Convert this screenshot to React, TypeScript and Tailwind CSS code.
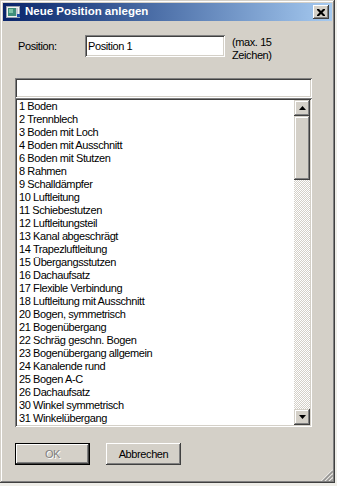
const items = [
  "1 Boden",
  "2 Trennblech",
  "3 Boden mit Loch",
  "4 Boden mit Ausschnitt",
  "6 Boden mit Stutzen",
  "8 Rahmen",
  "9 Schalldämpfer",
  "10 Luftleitung",
  "11 Schiebestutzen",
  "12 Luftleitungsteil",
  "13 Kanal abgeschrägt",
  "14 Trapezluftleitung",
  "15 Übergangsstutzen",
  "16 Dachaufsatz",
  "17 Flexible Verbindung",
  "18 Luftleitung mit Ausschnitt",
  "20 Bogen, symmetrisch",
  "21 Bogenübergang",
  "22 Schräg geschn. Bogen",
  "23 Bogenübergang allgemein",
  "24 Kanalende rund",
  "25 Bogen A-C",
  "26 Dachaufsatz",
  "30 Winkel symmetrisch",
  "31 Winkelübergang",
];

// classic win2k bevels
const raised =
  "shadow-[inset_-1px_-1px_0_#404040,inset_1px_1px_0_#d4d0c8,inset_-2px_-2px_0_#808080,inset_2px_2px_0_#ffffff]";
const sunken =
  "shadow-[inset_1px_1px_0_#808080,inset_-1px_-1px_0_#ffffff,inset_2px_2px_0_#404040,inset_-2px_-2px_0_#d4d0c8]";
const button =
  "shadow-[inset_-1px_-1px_0_#404040,inset_1px_1px_0_#ffffff,inset_-2px_-2px_0_#808080,inset_2px_2px_0_#d4d0c8]";

function Arrow({ down }: { down?: boolean }) {
  return (
    <div className={`w-[16px] h-[16px] bg-[#d4d0c8] flex items-center justify-center ${raised}`}>
      <svg width="7" height="4" viewBox="0 0 7 4">
        {down ? (
          <path d="M0 0h7L3.5 4z" fill="#000" />
        ) : (
          <path d="M0 4h7L3.5 0z" fill="#000" />
        )}
      </svg>
    </div>
  );
}

function TitleIcon() {
  return (
    <svg width="16" height="16" viewBox="0 0 16 16">
      <rect x="1.5" y="2.5" width="13" height="11" fill="#f4f4f4" stroke="#9aa4b0" />
      <rect x="3" y="4" width="8" height="8" fill="#3f8f7a" />
      <rect x="4" y="5" width="4" height="4" fill="#7fc4a8" />
      <rect x="11" y="4" width="2" height="8" fill="#c8ccd4" />
      <rect x="12" y="10" width="3" height="3" fill="#1c4fa8" />
    </svg>
  );
}

function App() {
  return (
    <div className="w-[337px] h-[486px] bg-[#efeee9] font-['Liberation_Sans',Arial,sans-serif] text-[11px] tracking-[-0.4px] text-black">
      <div
        className={`relative w-[335px] h-[483px] bg-[#d4d0c8] p-[3px] flex flex-col shadow-[inset_-1px_-1px_0_#404040,inset_1px_1px_0_#d4d0c8,inset_-2px_-2px_0_#808080,inset_2px_2px_0_#ffffff]`}
      >
        {/* title bar */}
        <div className="h-[18px] flex items-center bg-gradient-to-r from-[#0a246a] to-[#a6caf0] pl-[2px] pr-[3px]">
          <TitleIcon />
          <span className="ml-[4px] text-white font-bold text-[11.5px] tracking-normal">
            Neue Position anlegen
          </span>
          <div className={`ml-auto w-[16px] h-[14px] bg-[#d4d0c8] flex items-center justify-center ${button}`}>
            <svg width="8" height="7" viewBox="0 0 8 7">
              <path d="M0 0h2l2 2 2-2h2v1L5.5 3.5 8 6v1H6L4 5 2 7H0V6l2.5-2.5L0 1z" fill="#000" />
            </svg>
          </div>
        </div>

        <div className="pl-[12px] pt-[14px] flex flex-col">
          <div className="flex items-start h-[22px]">
            <div className="w-[70px] pl-[3px] leading-[22px]">Position:</div>
            <div className={`w-[140px] h-[22px] bg-white pl-[3px] leading-[22px] ${sunken}`}>
              Position 1
            </div>
            <div className="ml-[7px] leading-[13px] pt-[1px]">
              <div>(max. 15</div>
              <div>Zeichen)</div>
            </div>
          </div>

          <div className={`mt-[21px] w-[297px] h-[20px] bg-white ${sunken}`} />

          <div className={`w-[297px] h-[329px] bg-white p-[2px] flex ${sunken}`}>
            <div className="flex-1 pl-[2px] overflow-hidden">
              {items.map((it) => (
                <div key={it} className="h-[13px] leading-[13px] whitespace-nowrap">
                  {it}
                </div>
              ))}
            </div>
            <div className="w-[16px] flex flex-col">
              <Arrow />
              <div className={`h-[64px] bg-[#d4d0c8] ${raised}`} />
              <div className="flex-1 bg-[repeating-conic-gradient(#d4d0c8_0_25%,#ffffff_0_50%)] bg-[length:2px_2px]" />
              <Arrow down />
            </div>
          </div>

          <div className="mt-[16px] flex gap-[16px]">
            <div className="w-[75px] h-[22px] border border-black">
              <div
                className={`w-full h-full flex items-center justify-center text-[#808080] [text-shadow:1px_1px_0_#fff] ${button}`}
              >
                OK
              </div>
            </div>
            <div className={`w-[75px] h-[22px] flex items-center justify-center ${button}`}>
              Abbrechen
            </div>
          </div>
        </div>

        {/* size grip */}
        <svg className="absolute right-[2px] bottom-[2px]" width="12" height="12" viewBox="0 0 12 12">
          {[0, 4, 8].map((k) => (
            <g key={k}>
              <line x1={12} y1={k + 0.5} x2={k + 0.5} y2={12} stroke="#ffffff" />
              <line x1={12} y1={k + 1.5} x2={k + 1.5} y2={12} stroke="#808080" />
              <line x1={12} y1={k + 2.5} x2={k + 2.5} y2={12} stroke="#808080" />
            </g>
          ))}
        </svg>
      </div>
    </div>
  );
}

export default App;
